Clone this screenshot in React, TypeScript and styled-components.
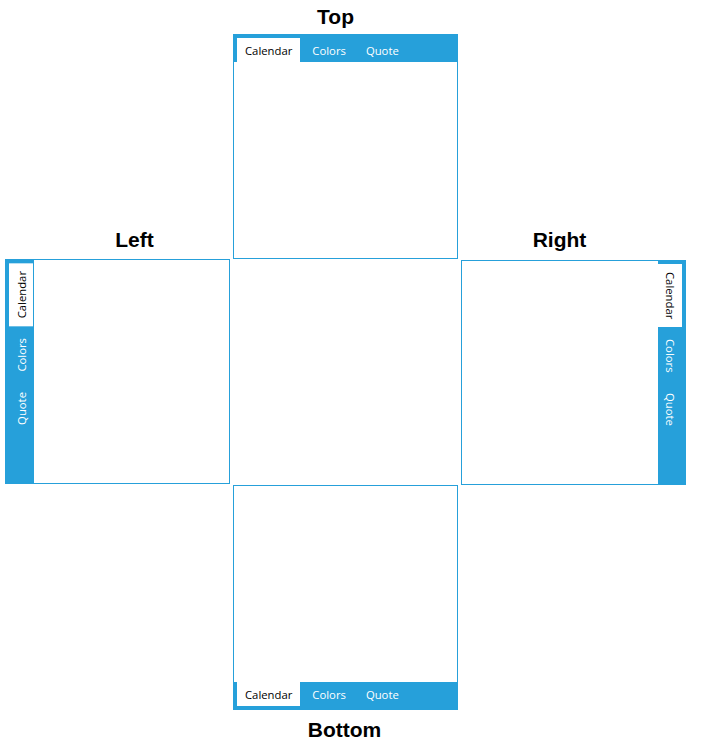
import React from "react";
import styled, { createGlobalStyle, css } from "styled-components";

type Side = "top" | "bottom" | "left" | "right";

const BLUE = "#26a0da";

const GlobalStyle = createGlobalStyle`
  body {
    margin: 0;
    background: #fff;
    font-family: "Open Sans", "Liberation Sans", sans-serif;
  }
`;

const Page = styled.div`
  display: grid;
  grid-template-columns: repeat(3, 225px);
  grid-template-rows: 34px 225px 226px 225px auto;
  column-gap: 3px;
  padding-left: 5px;
`;

const Title = styled.h2<{
  $col: number;
  $row: number;
  $align: "start" | "end";
  $shift: number;
  $space: number;
}>`
  grid-column: ${(p) => p.$col};
  grid-row: ${(p) => p.$row};
  align-self: ${(p) => p.$align};
  margin: ${(p) => (p.$align === "start" ? `${p.$space}px 0 0` : `0 0 ${p.$space}px`)};
  padding-left: ${(p) => (p.$shift > 0 ? p.$shift * 2 : 0)}px;
  padding-right: ${(p) => (p.$shift < 0 ? -p.$shift * 2 : 0)}px;
  text-align: center;
  font-family: "Liberation Sans", Arial, sans-serif;
  font-weight: bold;
  font-size: 21px;
  line-height: 24px;
  color: #000;
`;

const directions: Record<Side, string> = {
  top: "column",
  bottom: "column-reverse",
  left: "row",
  right: "row-reverse",
};

const Panel = styled.div<{ $side: Side; $col: number; $row: number; $align: "start" | "end" }>`
  grid-column: ${(p) => p.$col};
  grid-row: ${(p) => p.$row};
  align-self: ${(p) => p.$align};
  box-sizing: border-box;
  width: 225px;
  height: 225px;
  border: 1px solid ${BLUE};
  display: flex;
  flex-direction: ${(p) => directions[p.$side]};
  background: #fff;
`;

const Strip = styled.div<{ $side: Side }>`
  display: flex;
  flex-shrink: 0;
  background: ${BLUE};
  ${(p) =>
    p.$side === "top" &&
    css`
      height: 27px;
      box-sizing: border-box;
      padding: 3px 0 0 3px;
      align-items: flex-end;
    `}
  ${(p) =>
    p.$side === "bottom" &&
    css`
      height: 27px;
      box-sizing: border-box;
      padding: 0 0 3px 3px;
      align-items: flex-start;
    `}
  ${(p) =>
    p.$side === "left" &&
    css`
      flex-direction: column;
      width: 28px;
      box-sizing: border-box;
      padding: 3px 0 0 3px;
    `}
  ${(p) =>
    p.$side === "right" &&
    css`
      flex-direction: column;
      width: 27px;
      box-sizing: border-box;
      padding: 3px 3px 0 0;
      align-items: flex-end;
    `}
`;

const Tab = styled.div<{ $side: Side; $active?: boolean }>`
  display: flex;
  align-items: center;
  justify-content: center;
  box-sizing: border-box;
  font-size: 11.3px;
  white-space: nowrap;
  color: ${(p) => (p.$active ? "#000" : "#fff")};
  background: ${(p) => (p.$active ? "#fff" : "transparent")};
  ${(p) =>
    p.$side === "top" || p.$side === "bottom"
      ? css`
          height: 24px;
          padding: 0 ${p.$active ? 8 : 10}px;
          margin-right: ${p.$active ? 2 : 0}px;
        `
      : css`
          width: 24px;
          writing-mode: vertical-rl;
          padding: ${p.$active ? 8 : 10}px 0;
          margin-bottom: ${p.$active ? 2 : 0}px;
          ${p.$side === "left" && "transform: rotate(180deg);"}
        `}
`;

const Content = styled.div`
  flex: 1;
  background: #fff;
`;

const tabs = ["Calendar", "Colors", "Quote"];

function TabPanel({ side, col, row, align }: { side: Side; col: number; row: number; align: "start" | "end" }) {
  return (
    <Panel $side={side} $col={col} $row={row} $align={align}>
      <Strip $side={side}>
        {tabs.map((t, i) => (
          <Tab key={t} $side={side} $active={i === 0}>
            {t}
          </Tab>
        ))}
      </Strip>
      <Content />
    </Panel>
  );
}

export default function App() {
  return (
    <>
      <GlobalStyle />
      <Page>
        <Title $col={2} $row={1} $align="start" $shift={-10} $space={5}>Top</Title>
        <TabPanel side="top" col={2} row={2} align="start" />
        <Title $col={1} $row={2} $align="end" $shift={17} $space={7}>Left</Title>
        <Title $col={3} $row={2} $align="end" $shift={-14} $space={7}>Right</Title>
        <TabPanel side="left" col={1} row={3} align="start" />
        <TabPanel side="right" col={3} row={3} align="end" />
        <TabPanel side="bottom" col={2} row={4} align="start" />
        <Title $col={2} $row={5} $align="start" $shift={-1} $space={8}>Bottom</Title>
      </Page>
    </>
  );
}
